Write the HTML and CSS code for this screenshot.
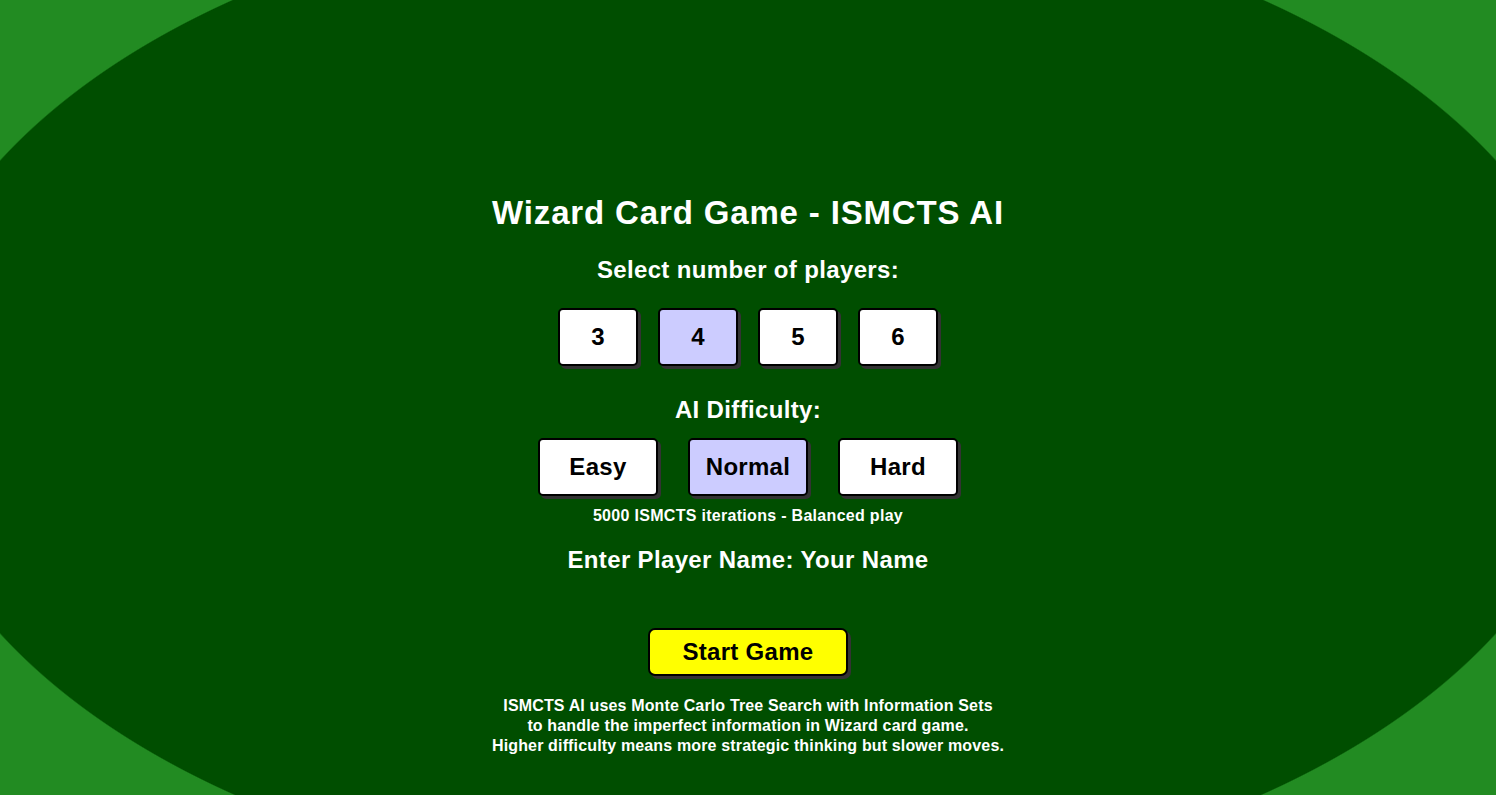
FILE: index.html
```html
<!DOCTYPE html>
<html lang="en">
<head>
<meta charset="utf-8">
<title>Wizard Card Game - ISMCTS AI</title>
<link rel="stylesheet" href="styles.css">
</head>
<body>
<main class="screen">
  <h1 class="title">Wizard Card Game - ISMCTS AI</h1>
  <div class="label label-players">Select number of players:</div>
  <div class="choice-row players">
    <button class="choice small">3</button>
    <button class="choice small selected">4</button>
    <button class="choice small">5</button>
    <button class="choice small">6</button>
  </div>
  <div class="label label-ai">AI Difficulty:</div>
  <div class="choice-row difficulty">
    <button class="choice wide">Easy</button>
    <button class="choice wide selected">Normal</button>
    <button class="choice wide">Hard</button>
  </div>
  <div class="hint">5000 ISMCTS iterations - Balanced play</div>
  <div class="label label-name">Enter Player Name: Your Name</div>
  <button class="start">Start Game</button>
  <div class="info">
    <div>ISMCTS AI uses Monte Carlo Tree Search with Information Sets</div>
    <div>to handle the imperfect information in Wizard card game.</div>
    <div>Higher difficulty means more strategic thinking but slower moves.</div>
  </div>
</main>
</body>
</html>
```

FILE: styles.css
```css
html, body {
  margin: 0;
  padding: 0;
}

body {
  width: 1496px;
  height: 795px;
  overflow: hidden;
  background: #228b22;
  font-family: "Liberation Sans", Arial, sans-serif;
  font-weight: bold;
  color: #ffffff;
}

.screen {
  box-sizing: border-box;
  height: 795px;
  display: flex;
  flex-direction: column;
  align-items: center;
  padding-top: 193px;
  background: radial-gradient(ellipse 850px 500px at 748px 397px, #004e00 99.8%, #228b22 100%);
}

.title {
  margin: 0;
  font-size: 33px;
  line-height: 40px;
  letter-spacing: 0.85px;
  font-weight: bold;
}

.label {
  font-size: 24px;
  line-height: 30px;
  letter-spacing: 0.35px;
}

.label-players {
  margin-top: 22px;
}

.choice-row {
  display: flex;
  margin-top: 23px;
}

.players {
  gap: 20px;
}

.difficulty {
  gap: 30px;
  margin-top: 13px;
}

.label-ai {
  margin-top: 29px;
}

.choice {
  box-sizing: border-box;
  height: 58px;
  border: 2px solid #000000;
  border-radius: 5px;
  background: #ffffff;
  box-shadow: 3px 3px 0 #333333;
  font-family: "Liberation Sans", Arial, sans-serif;
  font-weight: bold;
  font-size: 24px;
  letter-spacing: 0.3px;
  color: #000000;
  padding: 0;
}

.choice.small {
  width: 80px;
}

.choice.wide {
  width: 120px;
}

.choice.selected {
  background: #ccccff;
}

.hint {
  margin-top: 10px;
  font-size: 16px;
  line-height: 20px;
  letter-spacing: 0.3px;
}

.label-name {
  margin-top: 19px;
}

.start {
  box-sizing: border-box;
  margin-top: 53px;
  width: 200px;
  height: 48px;
  border: 2px solid #000000;
  border-radius: 7px;
  background: #ffff00;
  box-shadow: 3px 3px 0 #333333;
  font-family: "Liberation Sans", Arial, sans-serif;
  font-weight: bold;
  font-size: 24px;
  letter-spacing: 0.3px;
  color: #000000;
  padding: 0;
}

.info {
  margin-top: 20px;
  font-size: 16px;
  line-height: 20px;
  letter-spacing: 0.15px;
  text-align: center;
}
```
